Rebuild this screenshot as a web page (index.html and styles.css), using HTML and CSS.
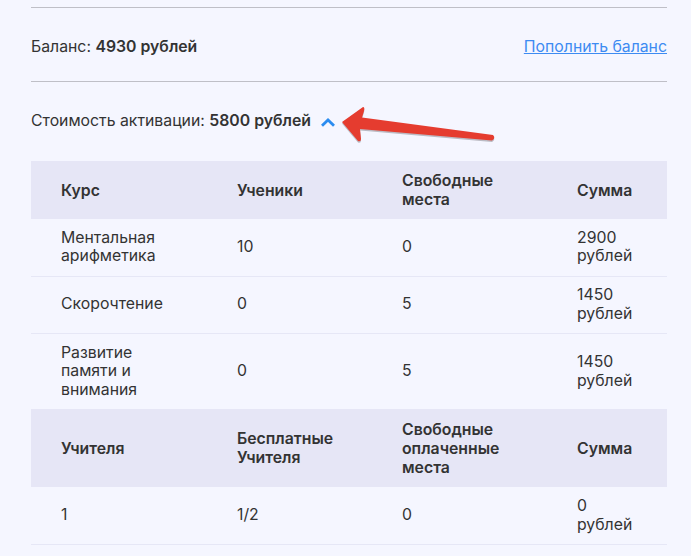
FILE: index.html
```html
<!DOCTYPE html>
<html lang="ru">
<head>
  <meta charset="UTF-8">
  <meta name="viewport" content="width=device-width, initial-scale=1.0">
  <title>Активация</title>
  <link rel="stylesheet" href="styles.css">
</head>
<body>
  <div class="content">
    <div class="balance-row">
      <span>Баланс: <b>4930 рублей</b></span>
      <a class="top-up" href="#">Пополнить баланс</a>
    </div>
    <div class="cost-row">
      <span>Стоимость активации: <b>5800 рублей</b></span>
      <svg class="chevron" width="14" height="9" viewBox="0 0 14 9">
        <path d="M1 7.800 L7 2 L13 7.800" fill="none" stroke="#2b8cf0" stroke-width="2.800"/>
      </svg>
    </div>
    <table class="cost-table">
      <tr class="head">
        <th>Курс</th>
        <th>Ученики</th>
        <th>Свободные места</th>
        <th>Сумма</th>
      </tr>
      <tr>
        <td>Ментальная арифметика</td>
        <td>10</td>
        <td>0</td>
        <td>2900 рублей</td>
      </tr>
      <tr>
        <td>Скорочтение</td>
        <td>0</td>
        <td>5</td>
        <td>1450 рублей</td>
      </tr>
      <tr class="no-line">
        <td>Развитие памяти и внимания</td>
        <td>0</td>
        <td>5</td>
        <td>1450 рублей</td>
      </tr>
      <tr class="head head-tall">
        <th>Учителя</th>
        <th>Бесплатные Учителя</th>
        <th>Свободные оплаченные места</th>
        <th>Сумма</th>
      </tr>
      <tr>
        <td>1</td>
        <td>1/2</td>
        <td>0</td>
        <td>0 рублей</td>
      </tr>
    </table>
  </div>

  <!-- красная стрелка поверх скриншота -->
  <svg class="arrow" width="170" height="50" viewBox="0 0 170 50">
    <path d="M12 20 L33 5 Q35 5 34 9 L32 15.500 L163 33 Q166 36 162 38.500 L30 27 L31 37 Q31 40 28 39 Z" fill="#bbbbc4" transform="translate(0 1.5)"/>
    <path d="M12 20 L33 5 Q35 5 34 9 L32 15.500 L163 33 Q166 36 162 38.500 L30 27 L31 37 Q31 40 28 39 Z" fill="#e53c2f"/>
  </svg>
</body>
</html>
```

FILE: styles.css
```css
html, body {
  margin: 0;
  padding: 0;
  height: 100%;
  overflow: hidden;
  background-color: #f5f6ff;
  font-family: Inter, "Noto Sans", sans-serif;
  font-size: 15.8px;
  line-height: 19px;
  color: #333333;
}

.content {
  margin: 7px 24px 0 31px;
  border-top: 1px solid #bfbfc7;
}

.balance-row {
  display: flex;
  justify-content: space-between;
  align-items: center;
  height: 74px;
  padding-top: 3px;
  box-sizing: border-box;
  border-bottom: 1px solid #bfbfc7;
}

.balance-row b, .cost-row b {
  font-weight: 600;
}

.top-up {
  color: #3d8bf2;
}

.cost-row {
  display: flex;
  align-items: center;
  gap: 10px;
  height: 77px;
  padding-bottom: 2px;
}

.chevron {
  margin-top: 4px;
}

.cost-table {
  width: 636px;
  table-layout: fixed;
  border-collapse: collapse;
}

.cost-table th, .cost-table td {
  padding: 9.5px 30px;
  text-align: left;
  vertical-align: middle;
}

.cost-table td {
  line-height: 18.75px;
  border-bottom: 1px solid #e6e7f6;
}

.cost-table th {
  font-weight: 600;
  padding-top: 10px;
  padding-bottom: 10px;
}

.cost-table .head-tall th {
  padding-top: 10.5px;
  padding-bottom: 10.5px;
}

.cost-table .no-line td {
  border-bottom: none;
}

.cost-table th:nth-child(1) { width: 116px; }
.cost-table th:nth-child(2) { width: 105px; }
.cost-table th:nth-child(3) { width: 115px; }
.cost-table th:nth-child(4) { width: 60px; }

.head {
  background-color: #e6e6f6;
}

.arrow {
  position: absolute;
  left: 330px;
  top: 102px;
}
```
